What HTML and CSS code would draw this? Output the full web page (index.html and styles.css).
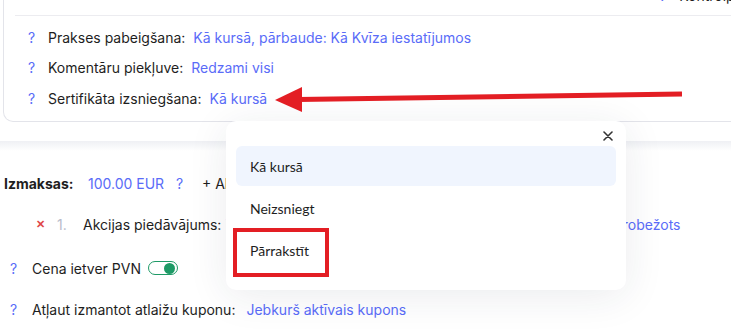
FILE: index.html
```html
<!DOCTYPE html>
<html lang="lv">
<head>
    <meta charset="UTF-8">
    <meta name="viewport" content="width=device-width, initial-scale=1.0">
    <title>Kursa iestatījumi</title>
    <link rel="stylesheet" href="styles.css">
</head>
<body>
    <div class="page">
        <!-- kursa iestatījumu kartīte -->
        <div class="card">
            <div class="card-top">
                <span class="hint">?</span>
                <span class="label">Kontrolpunkti</span>
            </div>
            <div class="rows">
                <div class="row">
                    <span class="hint">?</span>
                    <span class="label">Prakses pabeigšana:</span>
                    <span class="value">Kā kursā, pārbaude: Kā Kvīza iestatījumos</span>
                </div>
                <div class="row">
                    <span class="hint">?</span>
                    <span class="label">Komentāru piekļuve:</span>
                    <span class="value">Redzami visi</span>
                </div>
                <div class="row">
                    <span class="hint">?</span>
                    <span class="label">Sertifikāta izsniegšana:</span>
                    <span class="value">Kā kursā</span>
                </div>
            </div>
        </div>

        <div class="band"></div>

        <!-- cenas sadaļa -->
        <div class="pricing">
            <div class="price-row">
                <span class="price-title">Izmaksas:</span>
                <span class="value">100.00 EUR</span>
                <span class="hint">?</span>
                <span class="add">+ Akcijas piedāvājums</span>
            </div>
            <div class="offer-row">
                <span class="remove">&#x2715;</span>
                <span class="num">1.</span>
                <span class="label">Akcijas piedāvājums:</span>
                <span class="value">77.00 EUR, derīgs līdz 31.12.2024, pieejamo vietu skaits neierobežots</span>
            </div>
            <div class="vat-row">
                <span class="hint">?</span>
                <span class="label">Cena ietver PVN</span>
                <span class="toggle"><span class="knob"></span></span>
            </div>
            <div class="coupon-row">
                <span class="hint">?</span>
                <span class="label">Atļaut izmantot atlaižu kuponu:</span>
                <span class="value">Jebkurš aktīvais kupons</span>
            </div>
        </div>
    </div>

    <!-- izvēlne -->
    <div class="popup">
        <div class="popup-head">
            <svg class="close" width="10" height="10" viewBox="0 0 10 10">
                <path d="M1 1 L9 9 M9 1 L1 9" stroke="#333" stroke-width="1.6" stroke-linecap="round"/>
            </svg>
        </div>
        <div class="options">
            <div class="option active">Kā kursā</div>
            <div class="option">Neizsniegt</div>
            <div class="option">Pārrakstīt</div>
        </div>
        <div class="mark"></div>
    </div>

    <svg class="arrow" width="731" height="330" viewBox="0 0 731 330">
        <line x1="682" y1="94" x2="298" y2="99.5" stroke="#e31e24" stroke-width="5"/>
        <polygon points="275,100 302,87 302,112" fill="#e31e24"/>
    </svg>
</body>
</html>
```

FILE: styles.css
```css
/* pamata stili */
body {
    margin: 0;
    font-family: 'Inter', 'Noto Sans', sans-serif;
    font-size: 14px;
    color: #1e1e1e;
    background: #fff;
    overflow: hidden;
    width: 731px;
    height: 330px;
    position: relative;
}

.hint {
    color: #5a6cf8;
}

.value {
    color: #5a6cf8;
}

/* kartīte */
.card {
    margin: -14px -20px 0 3px;
    padding-left: 11px;
    border: 1px solid #e3e4ea;
    border-top: none;
    border-radius: 0 0 10px 10px;
}

.card-top {
    height: 30px;
    box-sizing: border-box;
    border-bottom: 1px solid #ececf0;
    display: flex;
    align-items: flex-start;
    padding: 0 0 0 644px;
    line-height: 20px;
    gap: 13px;
    white-space: nowrap;
    overflow: hidden;
}

.rows {
    display: flex;
    flex-direction: column;
    gap: 10.5px;
    padding: 11px 0 13px 13px;
}

.row {
    display: flex;
    align-items: center;
    height: 20px;
    white-space: nowrap;
}

.row .hint {
    width: 20px;
}

.row .label {
    margin-right: 8px;
}

.band {
    margin-top: 19px;
    height: 10px;
    background: linear-gradient(#eff0f4, #fff);
}

/* cenas */
.pricing {
    padding-top: 22px;
    display: flex;
    flex-direction: column;
    white-space: nowrap;
}

.price-row {
    display: flex;
    align-items: center;
    height: 20px;
    padding-left: 4px;
}

.price-title {
    font-weight: 700;
    width: 84px;
}

.price-row .value {
    width: 88px;
}

.price-row .hint {
    width: 26px;
}

.offer-row {
    display: flex;
    align-items: center;
    height: 20px;
    margin-top: 21px;
    padding-left: 36px;
}

.remove {
    color: #e04848;
    font-size: 11px;
    font-weight: bold;
    width: 21px;
}

.num {
    color: #b8bccb;
    width: 26px;
}

.offer-row .label {
    margin-right: 4px;
}

.vat-row {
    display: flex;
    align-items: center;
    height: 20px;
    margin-top: 24px;
    padding-left: 10px;
}

.vat-row .hint,
.coupon-row .hint {
    width: 22px;
}

.toggle {
    width: 24px;
    height: 12px;
    border: 1.5px solid #1e9a66;
    border-radius: 8px;
    margin-left: 7px;
    display: flex;
    align-items: center;
    justify-content: flex-end;
    padding: 0 2px;
}

.knob {
    width: 11px;
    height: 11px;
    border-radius: 50%;
    background: #1e9a66;
}

.coupon-row {
    display: flex;
    align-items: center;
    height: 20px;
    margin-top: 21px;
    padding-left: 10px;
}

.coupon-row .label {
    margin-right: 11px;
}

/* izvēlne */
.popup {
    position: absolute;
    left: 226px;
    top: 121px;
    width: 400px;
    height: 169px;
    box-sizing: border-box;
    padding: 0 10px;
    background: #fff;
    border-radius: 10px;
    box-shadow: 0 6px 40px rgba(30, 40, 70, 0.09);
    font-family: 'Lato', 'Noto Sans', sans-serif;
    font-size: 14px;
    color: #1e1e1e;
}

.popup-head {
    height: 25px;
    display: flex;
    justify-content: flex-end;
    align-items: flex-end;
    padding-right: 3px;
}

.close {
    margin-bottom: 5px;
}

.options {
    display: flex;
    flex-direction: column;
    gap: 2px;
}

.option {
    height: 40px;
    display: flex;
    align-items: center;
    padding-left: 14px;
    border-radius: 6px;
}

.option.active {
    background: #f0f5fe;
}

.mark {
    position: absolute;
    left: 7px;
    top: 107px;
    width: 96px;
    height: 49px;
    box-sizing: border-box;
    border: 4.5px solid #e31e24;
}

.arrow {
    position: absolute;
    left: 0;
    top: 0;
    pointer-events: none;
}
```
